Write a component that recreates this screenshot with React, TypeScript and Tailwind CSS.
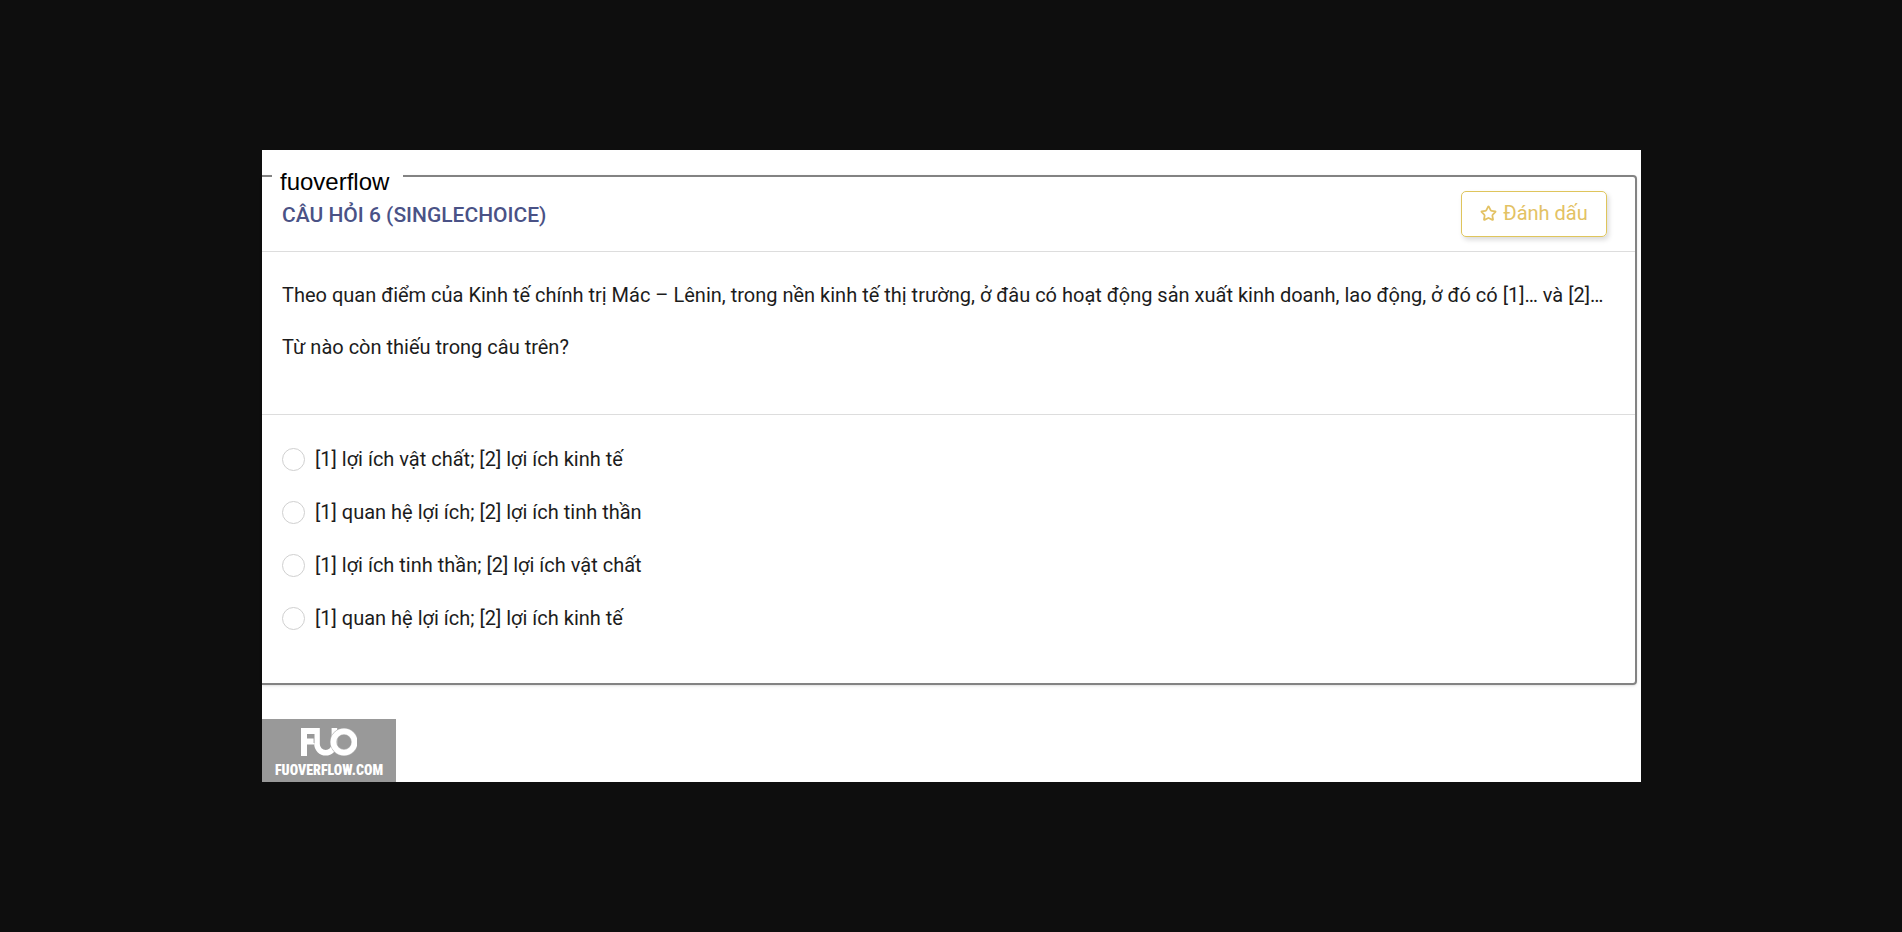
import { Star } from "lucide-react";

const options = [
  "[1] lợi ích vật chất; [2] lợi ích kinh tế",
  "[1] quan hệ lợi ích; [2] lợi ích tinh thần",
  "[1] lợi ích tinh thần; [2] lợi ích vật chất",
  "[1] quan hệ lợi ích; [2] lợi ích kinh tế",
];

function Brand() {
  return (
    <footer className="flex h-[63px] w-[134px] flex-col items-center bg-[#999999] pt-[9px] text-white">
      <svg viewBox="0 0 56 28" className="h-7 w-14" fill="none" stroke="currentColor" aria-hidden="true">
        <path d="M3 28V3H16M3 13.500H13" strokeWidth="6" />
        <path d="M16 0V16A8.700 8.700 0 0 0 33.400 16V0" strokeWidth="5.600" />
        <path d="M13 6V15" stroke="#999999" strokeWidth="0.800" />
        <circle cx="43" cy="14" r="10.600" stroke="#b4b4b4" strokeWidth="6.800" />
        <circle cx="43" cy="14" r="10.600" strokeWidth="5.800" />
      </svg>
      <span className="pt-1 font-['Roboto_Condensed',Roboto,sans-serif] text-[14px] leading-5 font-black">
        FUOVERFLOW.COM
      </span>
    </footer>
  );
}

export default function App() {
  return (
    <div className="min-h-screen bg-[#0e0e0e] pt-[150px] pr-[261px] pl-[262px] font-[Roboto,sans-serif] text-[20px] text-[#1c1c1c]">
      <main className="bg-white pt-[25px]">
        <section className="relative mr-1 rounded-r-[4px] border-2 border-l-0 border-[#838383] shadow-sm">
          <div className="absolute -top-[9px] left-[10px] bg-white px-2 pr-[14px] font-['Liberation_Sans',sans-serif] text-[24px] leading-7 text-black">
            fuoverflow
          </div>
          <header className="flex h-[75px] items-center justify-between border-b border-[#dddddd] pr-7 pl-5">
            <h1 className="pt-1 text-[21px] font-medium text-[#4a5286]">CÂU HỎI 6 (SINGLECHOICE)</h1>
            <button className="flex h-[46px] w-[146px] items-center justify-center gap-1.5 rounded-[5px] border border-[#dfc55c] pb-0.5 text-[#e3c264] shadow-[2px_3px_5px_#00000024]">
              <Star size={17} strokeWidth={2.5} />
              Đánh dấu
            </button>
          </header>
          <div className="flex h-[163px] flex-col gap-6 border-b border-[#dddddd] px-5 pt-[29px] leading-7">
            <p>
              Theo quan điểm của Kinh tế chính trị Mác – Lênin, trong nền kinh tế thị trường, ở đâu có hoạt động sản xuất kinh doanh, lao động, ở đó có [1]… và [2]…
            </p>
            <p>Từ nào còn thiếu trong câu trên?</p>
          </div>
          <fieldset className="flex flex-col gap-[25px] px-5 pt-[30px] pb-[51px]">
            {options.map((text) => (
              <label key={text} className="flex items-center gap-[10px] leading-7">
                <input type="radio" name="answer" className="size-[23px] appearance-none rounded-full border border-[#d0d0d0]" />
                {text}
              </label>
            ))}
          </fieldset>
        </section>
        <div className="pt-[34px]">
          <Brand />
        </div>
      </main>
    </div>
  );
}
